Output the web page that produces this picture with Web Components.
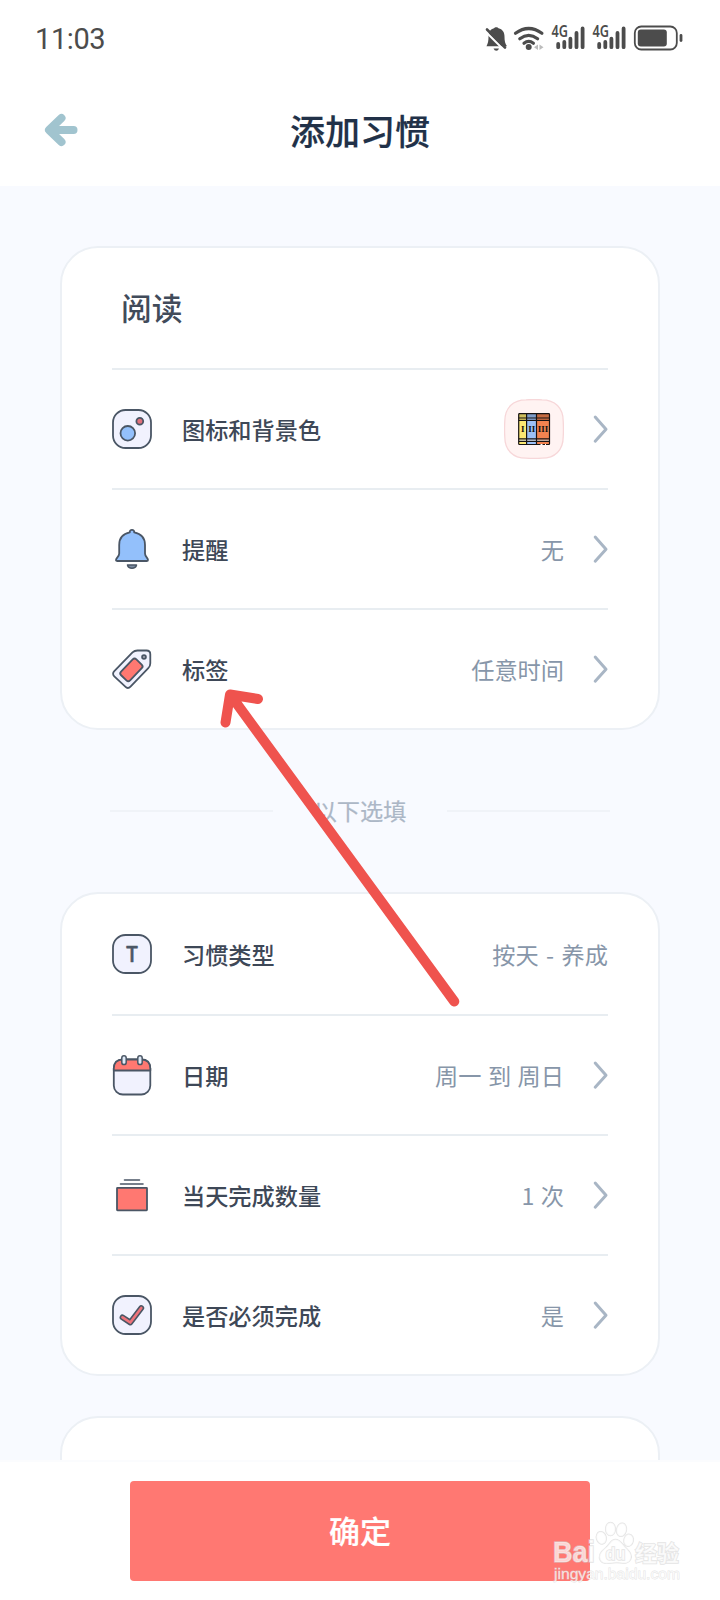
<!DOCTYPE html>
<html lang="zh-CN">
<head>
<meta charset="utf-8">
<title>添加习惯</title>
<style>
html,body{margin:0;padding:0}
body{width:720px;height:1600px;overflow:hidden;font-family:"Noto Sans CJK SC","Noto Sans",sans-serif;background:#fff}
</style>
</head>
<body>
<habit-app></habit-app>
<script>
const INK = '#4a5665';
const ICONS = {
  palette: `<rect x="1" y="1" width="38" height="38" rx="12.5" fill="#f1f2fe"/><circle cx="15.8" cy="24.3" r="7.3" fill="#93c0fb"/><circle cx="27.8" cy="12.3" r="3.4" fill="#e2727c"/>`,
  bell: `<path d="M20 .8c1.5 0 2.3 1 2.2 2.6 6.700 1.300 10.800 5.800 10.800 12.600v8.500c0 3.200 3 4.200 3 6.500 0 .8-.6 1-1.400 1H5.400C4.600 32 4 31.800 4 31c0-2.300 3.200-3.300 3.200-6.500V16C7.200 9.200 11.100 4.700 17.800 3.400 17.700 1.800 18.500 .8 20 .8Z" fill="#93c0fb"/><path d="M15.500 36h9c-1 4.300-8 4.300-9 0Z" fill="#7d8da3" stroke-width="1.500"/>`,
  tag: `<path d="M20.500 3.300C22 1.900 23.500 1.500 25.500 1.500H34.500c2.400 0 3.800 1.400 3.800 3.700v9c0 2.100-.6 3.600-2 5L18.500 37.700c-1.700 1.700-3.600 1.700-5.200 0L2.300 27.300c-1.600-1.500-1.700-3.500 0-5.200Z" fill="#f1f2fe"/><rect x="-11" y="-6.300" width="22" height="12.600" rx="2.600" transform="translate(19.400 20.900) rotate(-46)" fill="#ff7871"/><circle cx="32" cy="8" r="1.900" fill="#aaaab8"/>`,
  type: `<rect x="1" y="1" width="38" height="38" rx="12.500" fill="#f1f2fe"/><text x="20" y="28.300" text-anchor="middle" font-family="Inter,sans-serif" font-size="22" font-weight="500" fill="${INK}" stroke="${INK}" stroke-width=".7" textLength="12.500" lengthAdjust="spacingAndGlyphs">T</text>`,
  calendar: `<rect x="1.800" y="4.500" width="36.500" height="35" rx="9" fill="#f1f2fe"/><path d="M1.800 15.500V13.500Q1.800 4.500 10.800 4.500H29.300Q38.300 4.500 38.300 13.500V15.500Z" fill="#ff7871"/><rect x="9.800" y=".8" width="4.400" height="8.800" rx="2.200" fill="#dfeaf7" stroke-width="1.500"/><rect x="25.800" y=".8" width="4.400" height="8.800" rx="2.200" fill="#dfeaf7" stroke-width="1.500"/>`,
  stack: `<rect x="5" y="12.800" width="30" height="22.500" rx=".5" fill="#ff7871"/><path d="M8.500 9h22.500M12.500 5h15" stroke-width="1.600" stroke-linecap="round"/>`,
  check: `<rect x="1" y="1" width="38" height="38" rx="12.500" fill="#f1f2fe"/><path d="M10.500 22.300l7.800 5.200L29.300 13" fill="none" stroke-width="5.800" stroke-linecap="round" stroke-linejoin="round"/><path d="M10.500 22.300l7.800 5.200L29.300 13" fill="none" stroke="#ef747b" stroke-width="2.700" stroke-linecap="round" stroke-linejoin="round"/>`
};

function define(name, html, init) {
  const t = document.createElement('template');
  t.innerHTML = html;
  customElements.define(name, class extends HTMLElement {
    constructor() {
      super();
      this.attachShadow({ mode: 'open' }).append(t.content.cloneNode(true));
    }
    connectedCallback() { if (init) init(this, this.shadowRoot); }
  });
}

const signal = x => `<g transform="translate(${x} 0)"><text x="-.5" y="17.300" font-family="Noto Sans,sans-serif" font-weight="600" font-size="15.500" textLength="16.500" lengthAdjust="spacingAndGlyphs" fill="#4c4c4c">4G</text><path d="M6.200 27.200v-3.300M12.300 27.200v-5.200M18.400 27.200v-8.500M24.500 27.200V13M30.600 27.200V8.500" stroke="#4c4c4c" stroke-width="3.800" stroke-linecap="round" fill="none"/></g>`;

define('status-bar', `<style>
:host{display:flex;height:76px;box-sizing:border-box;padding:0 35px 0 35px;align-items:center;justify-content:space-between;color:#4c4c4c}
.time{font:400 29px/40px Roboto,sans-serif;letter-spacing:-.4px;padding-top:2px}
svg{display:block}
</style>
<span class="time">11:03</span>
<svg width="200" height="36" viewBox="0 0 200 36">
<path d="M3 27.500C4.500 24.500 5 22 5 18C5 13 7 10.500 10.500 9.500C11 8 14.500 8 15 9.500C19 10.500 21 13.500 21 18C21 22 21.500 25 23.500 27.500Z" fill="#4c4c4c" transform="translate(-1.500 -1.200)"/>
<path d="M8.500 28.500h5.500q-.8 2.300-2.700 2.300t-2.800-2.300Z" fill="#4c4c4c"/>
<path d="M.500 11.500L17.500 28.500" stroke="#fff" stroke-width="2.200"/><path d="M2 9.500L20 27.500" stroke="#4c4c4c" stroke-width="2.600" stroke-linecap="round"/>
<g fill="none" stroke="#4c4c4c" stroke-width="3.200" stroke-linecap="round"><path d="M30.500 13.300q13.200-9.600 26.400 0M34.800 18.700q8.900-6.700 17.800 0"/><path d="M39 23.300q4.700-3.700 9.400 0"/></g>
<circle cx="43.700" cy="27" r="3" fill="#4c4c4c"/>
<path d="M53 24.500v5.500l-4-2.700ZM54.500 24.500v5.500l4-2.700Z" fill="#bcbcbc"/>
${signal(67)}${signal(108)}
<rect x="149.800" y="6.500" width="42" height="23" rx="6.500" fill="none" stroke="#4c4c4c" stroke-width="1.800"/>
<rect x="152.800" y="9.500" width="29" height="17" rx="3" fill="#4c4c4c"/>
<path d="M196 15.500v5" stroke="#4c4c4c" stroke-width="2.800" stroke-linecap="round"/>
</svg>`);

define('nav-bar', `<style>
:host{display:grid;grid-template-columns:120px 1fr 120px;height:110px;align-items:center;background:#fff}
svg{display:block;margin:0 0 2px 43px}
h1{margin:0;text-align:center;font-size:35px;line-height:50px;font-weight:500;color:#213148;padding-bottom:2px;-webkit-text-stroke:.2px}
</style>
<svg width="36" height="34" viewBox="0 0 36 34"><path d="M18.500 5L6 17l12.500 12M7 17h23.500" fill="none" stroke="#a1c4cf" stroke-width="8" stroke-linecap="round" stroke-linejoin="round"/></svg>
<h1><slot></slot></h1>`);

define('setting-card', `<style>
:host{display:block;box-sizing:border-box;width:600px;height:484px;margin:0 auto;border:2px solid #ecf0f5;border-radius:38px;background:#fff;padding:0 50px}
</style><slot></slot>`);

define('card-title', `<style>
:host{display:flex;box-sizing:border-box;height:122px;border-bottom:2px solid #e8edf1;align-items:center;padding-left:9px;font-size:30.700px;line-height:44px;font-weight:500;color:#414b5a;padding-bottom:2px}
</style><slot></slot>`);

define('setting-row', `<style>
:host{display:flex;box-sizing:border-box;height:120px;border-bottom:2px solid #e8edf1;align-items:center}
:host([tall]){height:122px}
:host([last]){height:118px;border:0}
svg{display:block;flex:none;overflow:visible}
.label{margin-left:30px;font-size:23.200px;font-weight:500;color:#3e4857;line-height:34px;flex:1;white-space:nowrap}
.value{font-size:23.200px;color:#8796a9;line-height:34px;white-space:nowrap;word-spacing:1.300px}
:host([fixed]) .value{word-spacing:2.300px}
.arrow{margin-left:29px}
:host([fixed]) .arrow{display:none}
</style>
<svg class="icon" width="40" height="40" viewBox="0 0 40 40" stroke="${INK}" stroke-width="1.800" stroke-linejoin="round"></svg>
<span class="label"></span><span class="value"><slot></slot></span>
<svg class="arrow" width="15" height="30" viewBox="0 0 15 30"><path d="M2.200 3L13 15.200 2.200 27.200" fill="none" stroke="#a9b6c5" stroke-width="3" stroke-linecap="round" stroke-linejoin="round"/></svg>`,
(host, root) => {
  root.querySelector('.icon').innerHTML = ICONS[host.getAttribute('icon')];
  root.querySelector('.label').textContent = host.getAttribute('label');
});

define('books-badge', `<style>
:host{display:block;width:60px;height:60px}svg{display:block}
text{font-family:"Liberation Serif",serif;font-weight:700;font-size:9px;text-anchor:middle;fill:#111}
</style>
<svg width="60" height="60" viewBox="0 0 60 60">
<path d="M22 .8Q30 .3 38 .8C51 .8 59.200 9 59.200 22Q59.700 30 59.200 38C59.200 51 51 59.200 38 59.200Q30 59.700 22 59.200C9 59.200 .8 51 .8 38Q.3 30 .8 22C.8 9 9 .8 22 .8Z" fill="#fff3f2" stroke="#f7d7d9" stroke-width="1.300"/>
<rect x="14.700" y="14.700" width="8" height="30.800" fill="#fce872"/><rect x="22.700" y="14.700" width="10" height="30.800" fill="#9cc0f7"/><rect x="32.700" y="14.700" width="12.800" height="30.800" fill="#f28350"/>
<path d="M14.700 14.700h30.800v5H14.700Z" fill="#000" fill-opacity=".18"/>
<path d="M14.700 40.500h30.800v1.800H14.700Z" fill="#fff" fill-opacity=".75"/>
<g fill="none" stroke="#171313" stroke-width="1.200"><rect x="14.700" y="14.700" width="30.800" height="30.800" rx=".8"/><path d="M22.600 14.700v30.800M32.500 14.700v30.800M14.700 19h30.800M14.700 21.400h30.800M14.700 39.800h30.800M14.700 42.400h30.800"/></g>
<text x="18.800" y="33">I</text><text x="27.700" y="33">II</text><text x="39" y="33">III</text>
<path d="M36.500 45.500h2M41 45.500h1" stroke="#fff" stroke-width="1.200"/>
</svg>`);

define('section-divider', `<style>
:host{display:flex;width:500px;margin:0 auto;height:162px;align-items:center;justify-content:space-between;font-size:23.200px;line-height:34px;color:#acb7c6}
i{display:block;width:163px;height:2px;background:#f0f3f8}
span{padding-bottom:2px;-webkit-text-stroke:.2px}
</style><i></i><span><slot></slot></span><i></i>`);

define('action-bar', `<style>
:host{display:flex;box-sizing:border-box;height:140px;background:#fff;border-top:2px solid #fbfcfe;padding-top:19px;justify-content:center;align-items:flex-start}
button{width:460px;height:100px;border:0;border-radius:4px;background:#ff7872;color:#fff;font:500 31px/44px "Noto Sans CJK SC",sans-serif;padding:0 0 2px;-webkit-text-stroke:.2px}
</style><button><slot></slot></button>`);

define('pointer-arrow', `<style>
:host{position:absolute;left:215px;top:680px;width:250px;height:335px;pointer-events:none}svg{display:block}
</style><svg width="250" height="335" viewBox="0 0 250 335"><path d="M239.300 321.500L15.500 15M10.500 42.500L15 14.500L43 19" fill="none" stroke="#ef534e" stroke-width="10" stroke-linecap="round" stroke-linejoin="round"/></svg>`);

define('water-mark', `<style>
:host{position:absolute;left:545px;top:1515px;width:145px;height:75px;pointer-events:none}svg{display:block}
text,path,ellipse{fill:#fff;fill-opacity:.7;stroke:#d2d2d2;stroke-opacity:.6;stroke-width:1.500;paint-order:stroke}
text{font-family:"Liberation Sans",sans-serif}
</style><svg width="145" height="75" viewBox="0 0 145 75">
<text x="8" y="47" font-size="29" font-weight="700" textLength="42" lengthAdjust="spacingAndGlyphs">Bai</text>
<ellipse cx="56.300" cy="22.800" rx="4.800" ry="6.200" transform="rotate(-15 56.300 22.800)"/><ellipse cx="65.500" cy="14" rx="4.800" ry="6.600"/><ellipse cx="76.500" cy="14.800" rx="4.800" ry="6.600" transform="rotate(12 76.500 14.800)"/><ellipse cx="83.600" cy="25.300" rx="4.600" ry="6" transform="rotate(10 83.600 25.300)"/>
<path d="M70.500 24.500C75 24.500 77 29 80.500 32.500C85 37 87.500 40 85.500 44.500C83 50 77 47.500 71 47.500S59 50.500 55.500 45.500C52.500 40.500 56.500 36 61 32.500C65 29 66 24.500 70.500 24.500Z"/>
<text x="60.500" y="45" font-size="18.500" font-weight="700" textLength="20" lengthAdjust="spacingAndGlyphs">du</text>
<text x="90" y="45.500" style="font-family:'Noto Sans CJK SC',sans-serif" font-size="22" font-weight="700">经验</text>
<text x="9" y="64" font-size="14.500" textLength="126" lengthAdjust="spacingAndGlyphs" style="stroke-width:.8">jingyan.baidu.com</text>
</svg>`);

define('habit-app', `<style>
:host{display:flex;flex-direction:column;position:relative;width:720px;height:1600px;overflow:hidden}
main{flex:1;min-height:0;overflow:hidden;background:#f8faff;padding-top:60px}
.next{margin-top:40px}
</style>
<status-bar></status-bar>
<nav-bar>添加习惯</nav-bar>
<main>
<setting-card>
<card-title>阅读</card-title>
<setting-row icon="palette" label="图标和背景色"><books-badge></books-badge></setting-row>
<setting-row icon="bell" label="提醒">无</setting-row>
<setting-row icon="tag" label="标签" last>任意时间</setting-row>
</setting-card>
<section-divider>以下选填</section-divider>
<setting-card>
<setting-row icon="type" label="习惯类型" tall fixed>按天 - 养成</setting-row>
<setting-row icon="calendar" label="日期">周一 到 周日</setting-row>
<setting-row icon="stack" label="当天完成数量">1 次</setting-row>
<setting-row icon="check" label="是否必须完成" last>是</setting-row>
</setting-card>
<setting-card class="next"></setting-card>
</main>
<action-bar>确定</action-bar>
<pointer-arrow></pointer-arrow>
<water-mark></water-mark>`);
</script>
</body>
</html>
